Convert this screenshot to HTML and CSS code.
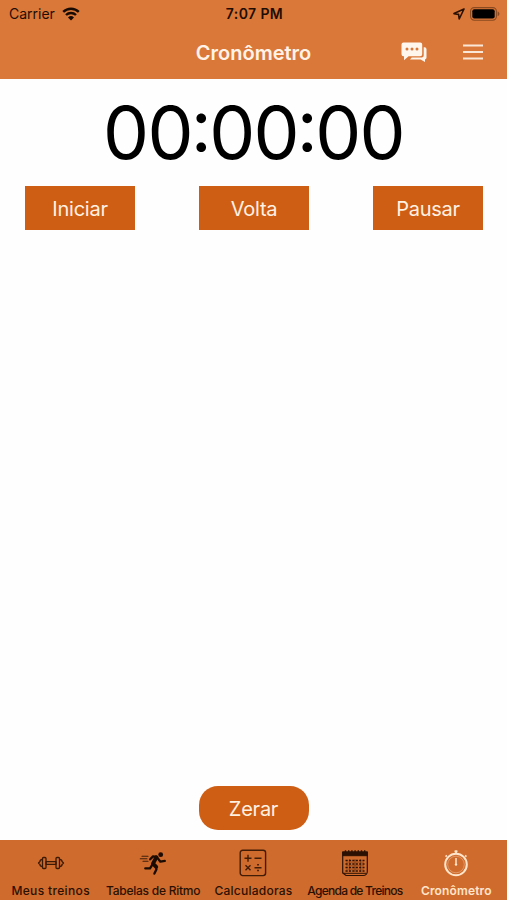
FILE: index.html
```html
<!DOCTYPE html>
<html lang="pt-BR">
<head>
    <meta charset="UTF-8">
    <meta name="viewport" content="width=device-width, initial-scale=1.0">
    <title>Cronômetro</title>
    <link rel="stylesheet" href="styles.css">
</head>
<body>
    <header class="header">
        <div class="status-bar">
            <div class="carrier">
                <span>Carrier</span>
                <svg width="18" height="14" viewBox="0 0 18 14">
                    <path d="M1.2 4.9a11.2 11.2 0 0 1 15.6 0M4 8a7.2 7.2 0 0 1 10 0" fill="none" stroke="#190b03" stroke-width="2.4"/>
                    <path d="M9 13.4 6 10.5a4.3 4.3 0 0 1 6 0z" fill="#190b03"/>
                </svg>
            </div>
            <div class="time">7:07 PM</div>
            <div class="battery">
                <svg width="12" height="12" viewBox="0 0 12 12">
                    <path d="M11 1 1 5.6l4.6.8.6 4.6z" fill="none" stroke="#2a1003" stroke-width="1.6" stroke-linejoin="round"/>
                </svg>
                <svg width="30" height="14" viewBox="0 0 30 14">
                    <rect x=".6" y=".6" width="25.8" height="12.6" rx="3.6" fill="none" stroke="#8b4a20" stroke-width="1.1"/>
                    <rect x="2.3" y="2.3" width="22.4" height="9.2" rx="2" fill="#000"/>
                    <path d="M27.6 4.6c2.4.6 2.4 4 0 4.6z" fill="#8b4a20"/>
                </svg>
            </div>
        </div>
        <div class="nav-bar">
            <h1 class="title">Cronômetro</h1>
            <div class="nav-icons">
                <svg width="26" height="21" viewBox="0 0 26 21">
                    <path d="M22.7 5.3h.8a2 2 0 0 1 2 2v8.2a2 2 0 0 1-1.5 2V20l-4.4-2.5H9l1.7-2h10a2 2 0 0 0 2-2z" fill="#fff6ee"/>
                    <path d="M2.5.5h16.7a2 2 0 0 1 2 2v9.7a2 2 0 0 1-2 2H7.6L3 18.2v-4h-.5a2 2 0 0 1-2-2V2.5a2 2 0 0 1 2-2z" fill="#fff6ee"/>
                    <circle cx="6" cy="7" r="1.5" fill="#da7839"/>
                    <circle cx="11" cy="7" r="1.5" fill="#da7839"/>
                    <circle cx="16" cy="7" r="1.5" fill="#da7839"/>
                </svg>
                <svg width="20" height="16" viewBox="0 0 20 16">
                    <path d="M0 1.5h20M0 8h20M0 14.5h20" stroke="#fbe7d8" stroke-width="1.9"/>
                </svg>
            </div>
        </div>
    </header>

    <main class="main">
        <div class="timer">00<span>:</span>00<span>:</span>00</div>
        <div class="controls">
            <button class="btn">Iniciar</button>
            <button class="btn">Volta</button>
            <button class="btn">Pausar</button>
        </div>
        <button class="btn zerar">Zerar</button>
    </main>

    <nav class="tab-bar">
        <a class="tab treinos">
            <svg width="28" height="28" viewBox="0 0 28 28" fill="none" stroke="#3d1a06" stroke-width="1.3" stroke-linejoin="round">
                <path d="M9 12.7h10v2.6H9z"/>
                <rect x="5.5" y="8.5" width="3.5" height="11" rx="1"/>
                <rect x="19" y="8.5" width="3.5" height="11" rx="1"/>
                <path d="M5.5 10.5c-2.2 0-2.5 1-2.5 2L1.500 14 3 15.500c0 1 .3 2 2.500 2M22.500 10.500c2.200 0 2.500 1 2.500 2l1.500 1.500-1.500 1.500c0 1-.3 2-2.500 2"/>
            </svg>
            <span>Meus treinos</span>
        </a>
        <a class="tab ritmo">
            <svg width="28" height="28" viewBox="0 0 28 28" fill="none" stroke="#1c0b02" stroke-linejoin="round" stroke-linecap="round">
                <circle cx="21.7" cy="5.7" r="2.4" fill="#1c0b02" stroke="none"/>
                <path d="m17.300 8.300-3.300 6.400 3.200 3.200" stroke-width="3.900"/>
                <path d="m11.200 10.300 2.800-2.900 3.800.6 3.600 4.700 4.400-.8M13.400 15.600l-2.400 3.700-4.700.1M17 17.900l.4 2.700-2 4" stroke-width="2.300"/>
                <path d="M3 7.200h6M1.300 9.700H8M4 12.200h5" stroke-width="1.100" opacity=".8"/>
            </svg>
            <span>Tabelas de Ritmo</span>
        </a>
        <a class="tab calculadoras">
            <svg width="28" height="28" viewBox="0 0 28 28" fill="none" stroke="#421c07" stroke-width="1.400">
                <rect x="1.200" y="1.200" width="25.400" height="25.400" rx="2.500"/>
                <path d="M5.500 9.200h7M9 5.700v7M15.500 9.200h7M6.500 16.200l5 5M11.500 16.200l-5 5M15.500 18.700h7"/>
                <path d="M19 15.100v1.500M19 20.800v1.500" stroke-width="1.800"/>
            </svg>
            <span>Calculadoras</span>
        </a>
        <a class="tab agenda">
            <svg width="28" height="28" viewBox="0 0 28 28" fill="none" stroke="#2d1204">
                <path d="M1.700 3h24.600v19.500a4 4 0 0 1-4 4H5L1.700 24z" stroke-width="1.200"/>
                <path d="M1.700 3h24.600v3.700H1.700z" fill="#2d1204"/>
                <path d="M4.500 1.200v3.500M7.700 1.200v3.500M10.900 1.200v3.500M14.100 1.200v3.500M17.300 1.200v3.500M20.500 1.200v3.500M23.700 1.200v3.500" stroke-width="1.400"/>
                <path d="M2 24.300h23" stroke-width="1"/>
                <path d="M4.500 11.500h19M4.500 15h19M4.500 18.500h19M4.500 22h19" stroke-width="1.500" stroke-dasharray="2.200 1.200"/>
                <path d="M5 13.200h18M5 16.700h18M5 20.200h18M8.500 10v13M14 10v13M19.500 10v13" stroke-width=".3"/>
            </svg>
            <span>Agenda de Treinos</span>
        </a>
        <a class="tab cronometro active">
            <svg width="28" height="28" viewBox="0 0 28 28" fill="none" stroke="#ffe5cc">
                <circle cx="14" cy="15.500" r="10.800" stroke-width="2"/>
                <circle cx="14" cy="15.500" r="8.300" stroke-width=".6" opacity=".6"/>
                <path d="M14 4.500V1.200M12.500 2.300h3M4.700 7.600l-1-1.200M23.300 7.600l1-1.200" stroke-width="1.800"/>
                <path d="M14 9v6.500" stroke-width="1.500"/>
                <circle cx="14" cy="15.600" r="1.200" fill="#ffe5cc" stroke="none"/>
            </svg>
            <span>Cronômetro</span>
        </a>
    </nav>
</body>
</html>
```
FILE: styles.css
```css
* {
    box-sizing: border-box;
}
body {
    display: flex;
    flex-direction: column;
    height: 100vh;
    margin: 0;
    background-color: #fefefe;
    font-family: Inter, "Liberation Sans", sans-serif;
    overflow: hidden;
}
svg {
    display: block;
}
.header {
    height: 79px;
    background-color: #da7839;
}
.status-bar {
    display: grid;
    grid-template-columns: 1fr auto 1fr;
    align-items: center;
    height: 27px;
    padding: 0 7px 0 9px;
    font-size: 14px;
    color: #1f0d03;
}
.carrier {
    display: flex;
    align-items: center;
    gap: 7px;
}
.time {
    font-weight: 600;
    letter-spacing: 0.4px;
}
.battery {
    display: flex;
    justify-content: flex-end;
    align-items: center;
    gap: 5px;
}
.nav-bar {
    display: grid;
    grid-template-columns: 1fr auto 1fr;
    align-items: center;
    height: 50px;
    padding: 0 24px;
}
.title {
    grid-column: 2;
    margin: 0;
    padding-top: 1px;
    font-size: 20px;
    font-weight: 600;
    color: #fff3e8;
}
.nav-icons {
    display: flex;
    justify-content: flex-end;
    align-items: center;
    gap: 36px;
}
.main {
    flex: 1;
    display: flex;
    flex-direction: column;
}
.timer {
    height: 107px;
    line-height: 107px;
    font-size: 73px;
    letter-spacing: -1.7px;
    text-align: center;
    white-space: nowrap;
    color: #000;
}
.timer span {
    margin: 0 -1px;
    line-height: 0;
    vertical-align: 7px;
}
.controls {
    display: flex;
    justify-content: space-between;
    padding: 0 24px 0 25px;
}
.btn {
    width: 110px;
    height: 44px;
    padding: 2px 0 0;
    border: none;
    background-color: #cf5e15;
    font-family: inherit;
    font-size: 20px;
    letter-spacing: -0.25px;
    color: #fff1e2;
    cursor: pointer;
}
.zerar {
    align-self: center;
    margin-top: auto;
    margin-bottom: 10px;
    border-radius: 19px;
}
.tab-bar {
    display: grid;
    grid-template-columns: repeat(5, minmax(0, 1fr));
    height: 60px;
    background-color: #cf6b2d;
}
.tab {
    display: flex;
    flex-direction: column;
    align-items: center;
    gap: 6px;
    padding-top: 9px;
    font-size: 12px;
    line-height: 16px;
    font-weight: 500;
    white-space: nowrap;
    color: #2b1002;
}
.treinos {
    letter-spacing: 0.35px;
}
.ritmo {
    padding-left: 2px;
    letter-spacing: -0.25px;
}
.calculadoras {
    letter-spacing: 0.25px;
}
.agenda {
    letter-spacing: -0.75px;
}
.cronometro {
    letter-spacing: 0.15px;
}
.tab.active {
    font-weight: 600;
    color: #ffe5cc;
}
```
